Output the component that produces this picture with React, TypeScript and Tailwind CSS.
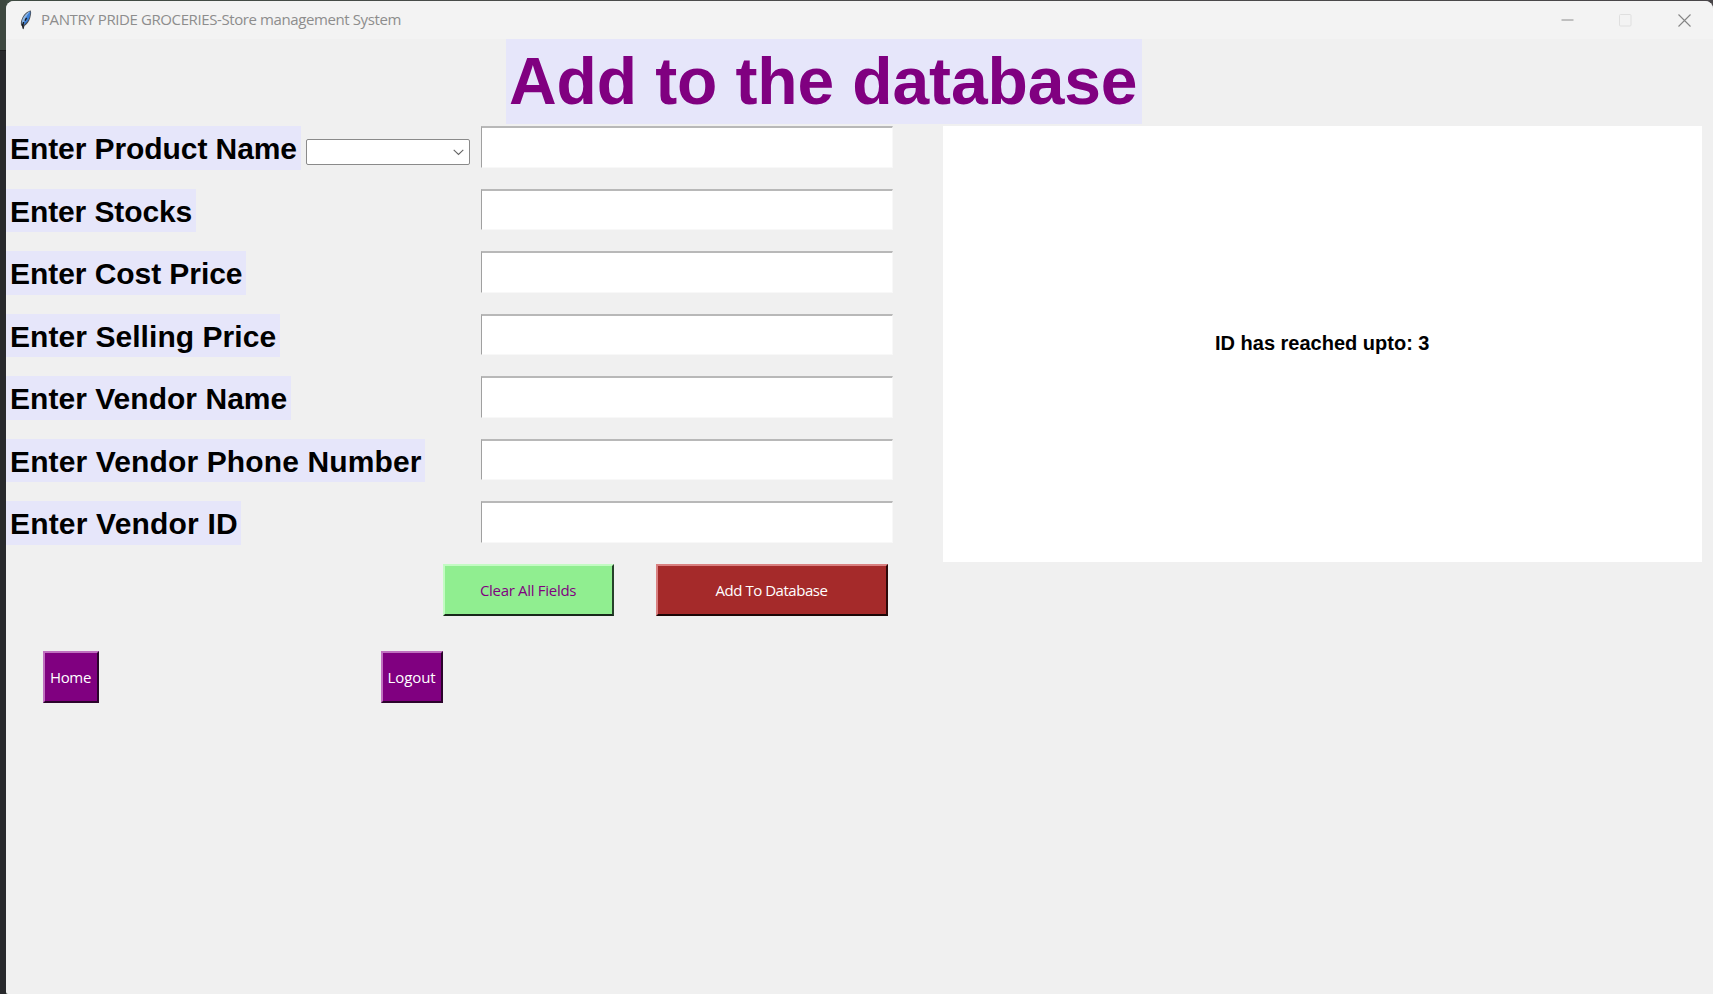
import React from "react";

const rows = [
  { label: "Enter Product Name", width: "w-[295px]", spacing: "tracking-[-0.08px]" },
  { label: "Enter Stocks", width: "w-[190px]", spacing: "tracking-[-0.1px]" },
  { label: "Enter Cost Price", width: "w-[240px]", spacing: "tracking-[-0.06px]" },
  { label: "Enter Selling Price", width: "w-[274px]", spacing: "tracking-[0.06px]" },
  { label: "Enter Vendor Name", width: "w-[285px]", spacing: "tracking-[0.03px]" },
  { label: "Enter Vendor Phone Number", width: "w-[419px]", spacing: "tracking-[0.13px]" },
  { label: "Enter Vendor ID", width: "w-[235px]", spacing: "tracking-[0.18px]" },
];

function Feather() {
  return (
    <svg width="12" height="20" viewBox="0 0 12 20" className="shrink-0">
      <path d="M10.8 0.4C7.5 1 4 4 2.2 8C0.8 11 0.4 14 1.4 15.8L3 16.4L3.3 19.8L4.5 16C7 14.5 9.2 11.5 10.2 8C11 5 11.5 2 10.8 0.4Z" fill="#4a4d53" />
      <path d="M10.3 1.2C7.4 2 4.2 5 2.7 8.8C1.9 11 1.5 13 2.2 14.8C5.5 11.5 9.2 6.3 10.3 1.2Z" fill="#8db6e4" />
      <path d="M10.3 1.6C10.6 6.6 8.4 12 3.6 15.2C4 11 6.4 5 10.3 1.6Z" fill="#3c7fd6" />
      <path d="M6.6 7.8L5 10.6M3.6 12L2.6 15.4L3.3 18.6" stroke="#17191d" strokeWidth="1.4" fill="none" />
    </svg>
  );
}

function TitleBar() {
  return (
    <header className="flex h-[38px] shrink-0 items-center bg-[#f3f3f3] pl-[14px]">
      <Feather />
      <span className="mb-[2px] ml-[9px] whitespace-nowrap font-['Open_Sans',sans-serif] text-[15px] leading-[20px] tracking-[-0.4px] text-[#8d8d8d]">
        PANTRY PRIDE GROCERIES-Store management System
      </span>
      <div className="ml-auto flex items-center pr-[22.5px]">
        <svg width="13" height="13" viewBox="0 0 13 13">
          <path d="M0.5 6H12.5" stroke="#8c8c8c" />
        </svg>
        <svg width="13" height="13" viewBox="0 0 13 13" className="ml-[45px]">
          <rect x="0.5" y="0.5" width="11.5" height="11.5" rx="1" fill="none" stroke="#dfdfdf" />
        </svg>
        <svg width="13" height="13" viewBox="0 0 13 13" className="ml-[46px]">
          <path d="M0.5 0.5L12.5 12.5M12.5 0.5L0.5 12.5" stroke="#858585" strokeWidth="1.1" />
        </svg>
      </div>
    </header>
  );
}

function TkButton({ text, frame, type }: { text: string; frame: string; type: string }) {
  return (
    <button className={`flex h-[52px] shrink-0 items-center justify-center border-2 ${frame}`}>
      <span className={`whitespace-nowrap pr-px font-['Open_Sans',sans-serif] text-[15px] leading-[20px] ${type}`}>{text}</span>
    </button>
  );
}

export default function App() {
  return (
    <div className="flex h-[994px] w-[1713px] overflow-hidden bg-[linear-gradient(90deg,#3f4b42,#4c4c4c_40%,#494649)] pt-px">
      <div className="-mt-px flex w-[6px] shrink-0 flex-col">
        <div className="h-[50px] bg-[#3d473f]" />
        <div className="grow border-t border-[#1c1c1e] bg-[#28292c]" />
      </div>
      <div className="flex w-[1707px] flex-col overflow-hidden rounded-t-[8px] rounded-bl-[2px] bg-[#f0f0f0]">
        <TitleBar />
        <h1 className="ml-[500px] h-[85px] w-[636px] shrink-0 whitespace-nowrap bg-[#e6e6fa] pl-[3px] font-['Liberation_Sans',sans-serif] text-[66px] font-bold leading-[84px] tracking-[-0.12px] text-[#800080]">
          Add to the database
        </h1>
        <main className="mt-[2.4px] flex">
          <section className="w-[887px] shrink-0">
            {rows.map((row, i) => (
              <div key={row.label} className="flex h-[62.5px] items-start">
                <div className="flex w-[475px] shrink-0 items-start">
                  <label className={`h-[43.6px] whitespace-nowrap bg-[#e6e6fa] pl-[4px] font-['Liberation_Sans',sans-serif] text-[30px] font-bold leading-[45px] text-black ${row.width} ${row.spacing}`}>
                    {row.label}
                  </label>
                  {i === 0 && (
                    <div className="ml-[5px] mt-[13px] flex h-[26px] w-[164px] items-center justify-end rounded-[2px] border border-[#8a8a8a] bg-white pr-[5px]">
                      <svg width="11" height="7" viewBox="0 0 11 7">
                        <path d="M0.7 0.8L5.5 5.5L10.3 0.8" fill="none" stroke="#666" strokeWidth="1.1" />
                      </svg>
                    </div>
                  )}
                </div>
                <input className="h-[41.5px] w-[412px] border-b border-l border-r border-t-2 border-b-[#f8f8f8] border-l-[#a0a0a0] border-r-[#f8f8f8] border-t-[#b8b8b8] bg-white outline-none" />
              </div>
            ))}
            <div className="flex pl-[437px]">
              <TkButton
                text="Clear All Fields"
                frame="w-[171px] bg-[#90ee90] border-t-[#c3fbc3] border-l-[#c3fbc3] border-r-[#26402a] border-b-[#18281a]"
                type="tracking-[-0.3px] text-[#800080]"
              />
              <div className="w-[42px] shrink-0" />
              <TkButton
                text="Add To Database"
                frame="w-[232px] bg-[#a52a2a] border-t-[#d98080] border-l-[#d98080] border-r-[#2d0909] border-b-[#1b0606]"
                type="tracking-[-0.47px] text-white"
              />
            </div>
            <div className="flex pl-[37px] pt-[35px]">
              <TkButton
                text="Home"
                frame="w-[56px] bg-[#800080] border-t-[#c070c0] border-l-[#c070c0] border-r-[#2c042c] border-b-[#2c042c]"
                type="tracking-[-0.3px] text-white"
              />
              <div className="w-[282px] shrink-0" />
              <TkButton
                text="Logout"
                frame="w-[62px] bg-[#800080] border-t-[#c070c0] border-l-[#c070c0] border-r-[#2c042c] border-b-[#2c042c]"
                type="tracking-[-0.1px] text-white"
              />
            </div>
          </section>
          <aside className="ml-[50px] flex h-[435.5px] w-[758.5px] items-center justify-center bg-white">
            <p className="mb-[3px] whitespace-nowrap font-['Liberation_Sans',sans-serif] text-[20px] font-bold leading-[24px] text-black">
              ID has reached upto: 3
            </p>
          </aside>
        </main>
      </div>
    </div>
  );
}
